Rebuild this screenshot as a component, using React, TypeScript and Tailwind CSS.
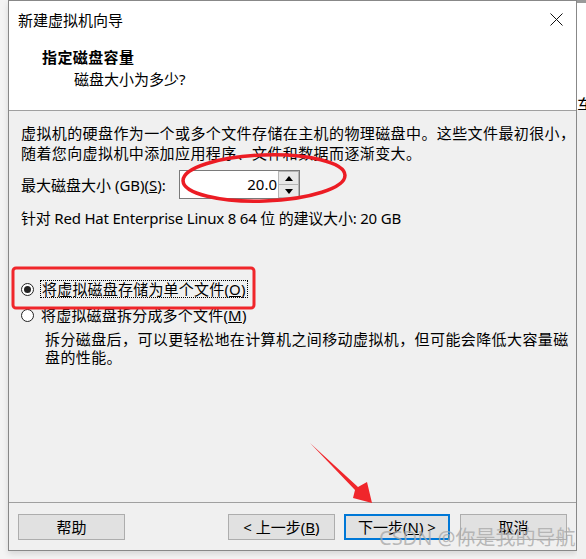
import React from 'react';

function Radio({ checked }: { checked?: boolean }) {
  return (
    <span className="flex h-[13px] w-[13px] shrink-0 items-center justify-center rounded-full border border-[#222222] bg-white">
      {checked && <span className="h-[7px] w-[7px] rounded-full bg-[#222222]" />}
    </span>
  );
}

function WizardButton({ children, focused }: { children: React.ReactNode; focused?: boolean }) {
  return (
    <button
      className={
        focused
          ? 'flex h-[26px] w-[106px] items-center justify-center border-2 border-[#0078d7] bg-[#e1e1e1] text-[15px] leading-none text-black'
          : 'flex h-[26px] w-[107px] items-center justify-center border border-[#adadad] bg-[#e1e1e1] text-[15px] leading-none text-black'
      }
    >
      {children}
    </button>
  );
}

export default function App() {
  return (
    <div className="relative flex h-[559px] w-[586px] overflow-hidden bg-[#f4f4f4] font-['Noto_Sans','Noto_Sans_CJK_SC',sans-serif] text-black">
      <div className="w-[8px] shrink-0" />

      {/* dialog */}
      <div className="flex h-[551px] w-[569px] shrink-0 flex-col border border-[#888888] bg-[#f0f0f0] shadow-[0_3px_6px_rgba(0,0,0,0.12)]">
        {/* header */}
        <div className="flex h-[110px] shrink-0 flex-col border-b border-[#a0a0a0] bg-white">
          <div className="flex items-start justify-between pl-[9px] pr-[13px] pt-[9px]">
            <span className="text-[15px] leading-[20px]">新建虚拟机向导</span>
            <svg width="13" height="13" viewBox="0 0 13 13" className="mt-[3px]">
              <path d="M0.5 0.5 L12.5 12.5 M12.5 0.5 L0.5 12.5" stroke="#111" strokeWidth="1" />
            </svg>
          </div>
          <div className="mt-[17px] pl-[33px] text-[15px] font-bold leading-[20px] tracking-[0.4px]">指定磁盘容量</div>
          <div className="mt-[2px] pl-[65px] text-[15px] leading-[20px]">磁盘大小为多少?</div>
        </div>

        {/* body */}
        <div className="flex flex-1 flex-col pl-[12px] pt-[12px]">
          <p className="text-[15px] leading-[20px] tracking-[0.4px]">
            虚拟机的硬盘作为一个或多个文件存储在主机的物理磁盘中。这些文件最初很小，
            <br />
            随着您向虚拟机中添加应用程序、文件和数据而逐渐变大。
          </p>

          <div className="mt-[7px] flex items-center">
            <span className="w-[158px] shrink-0 text-[15px] leading-[20px]">
              最大磁盘大小 (GB)(<span className="underline">S</span>):
            </span>
            <div className="flex h-[29px] w-[121px] border border-[#7a7a7a] bg-white">
              <div className="flex flex-1 items-center justify-end pr-[1px] text-[15px] leading-none">20.0</div>
              <div className="flex w-[21px] flex-col">
                <div className="flex h-[14px] items-center justify-center border border-[#b5b5b5] bg-[#e8e8e8]">
                  <svg width="8" height="5" viewBox="0 0 8 5">
                    <path d="M0 5 L4 0 L8 5 Z" fill="#000" />
                  </svg>
                </div>
                <div className="flex h-[13px] items-center justify-center border border-t-0 border-[#b5b5b5] bg-[#e8e8e8]">
                  <svg width="8" height="5" viewBox="0 0 8 5">
                    <path d="M0 0 L8 0 L4 5 Z" fill="#000" />
                  </svg>
                </div>
              </div>
            </div>
          </div>

          <div className="mt-[9px] text-[15px] leading-[20px] tracking-[-0.2px]">
            针对 Red Hat Enterprise Linux 8 64 位 的建议大小: 20 GB
          </div>

          <div className="mt-[48px] flex h-[26px] items-center gap-[6px]">
            <Radio checked />
            <span className="border border-dotted border-black px-[1px] text-[15px] leading-[16px] tracking-[0.2px]">
              将虚拟磁盘存储为单个文件(<span className="underline">O</span>)
            </span>
          </div>
          <div className="flex h-[26px] items-center gap-[7px]">
            <Radio />
            <span className="text-[15px] leading-[16px] tracking-[0.2px]">
              将虚拟磁盘拆分成多个文件(<span className="underline">M</span>)
            </span>
          </div>
          <p className="ml-[24px] mt-[2px] text-[15px] leading-[18px] tracking-[0.4px]">
            拆分磁盘后，可以更轻松地在计算机之间移动虚拟机，但可能会降低大容量磁
            <br />
            盘的性能。
          </p>
        </div>

        {/* footer */}
        <div className="flex h-[48px] shrink-0 items-start border-t border-[#a0a0a0] pl-[9px] pr-[9px] pt-[11px]">
          <WizardButton>帮助</WizardButton>
          <div className="flex-1" />
          <WizardButton>&lt; 上一步(<span className="underline">B</span>)</WizardButton>
          <div className="w-[9px]" />
          <WizardButton focused>下一步(<span className="underline">N</span>) &gt;</WizardButton>
          <div className="w-[10px]" />
          <WizardButton>取消</WizardButton>
        </div>
      </div>

      {/* strip of the window behind */}
      <div className="flex flex-1 flex-col">
        <div className="h-[3px] bg-[#9a9a9a]" />
        <div className="h-[107px] overflow-hidden bg-white pt-[94px] text-[17px] leading-none">车</div>
        <div className="flex-1 bg-[#f0f0f0]" />
      </div>

      {/* red annotations */}
      <svg className="pointer-events-none absolute left-0 top-0" width="586" height="559" viewBox="0 0 586 559">
        <ellipse cx="264" cy="178" rx="81" ry="23" fill="none" stroke="#ec1c24" strokeWidth="3.5" transform="rotate(-2 264 178)" />
        <rect x="13" y="268" width="241" height="40" rx="3" fill="none" stroke="#f0262b" strokeWidth="3" />
        <polygon points="310,443 358,487 367,482 372,503 353,498 355,490" fill="#f0262b" />
      </svg>

      {/* watermark */}
      <div className="pointer-events-none absolute left-[379px] top-[525px] text-[20px] leading-[26px] text-[#a9a9a9]/80">
        CSDN @你是我的导航
      </div>
    </div>
  );
}
